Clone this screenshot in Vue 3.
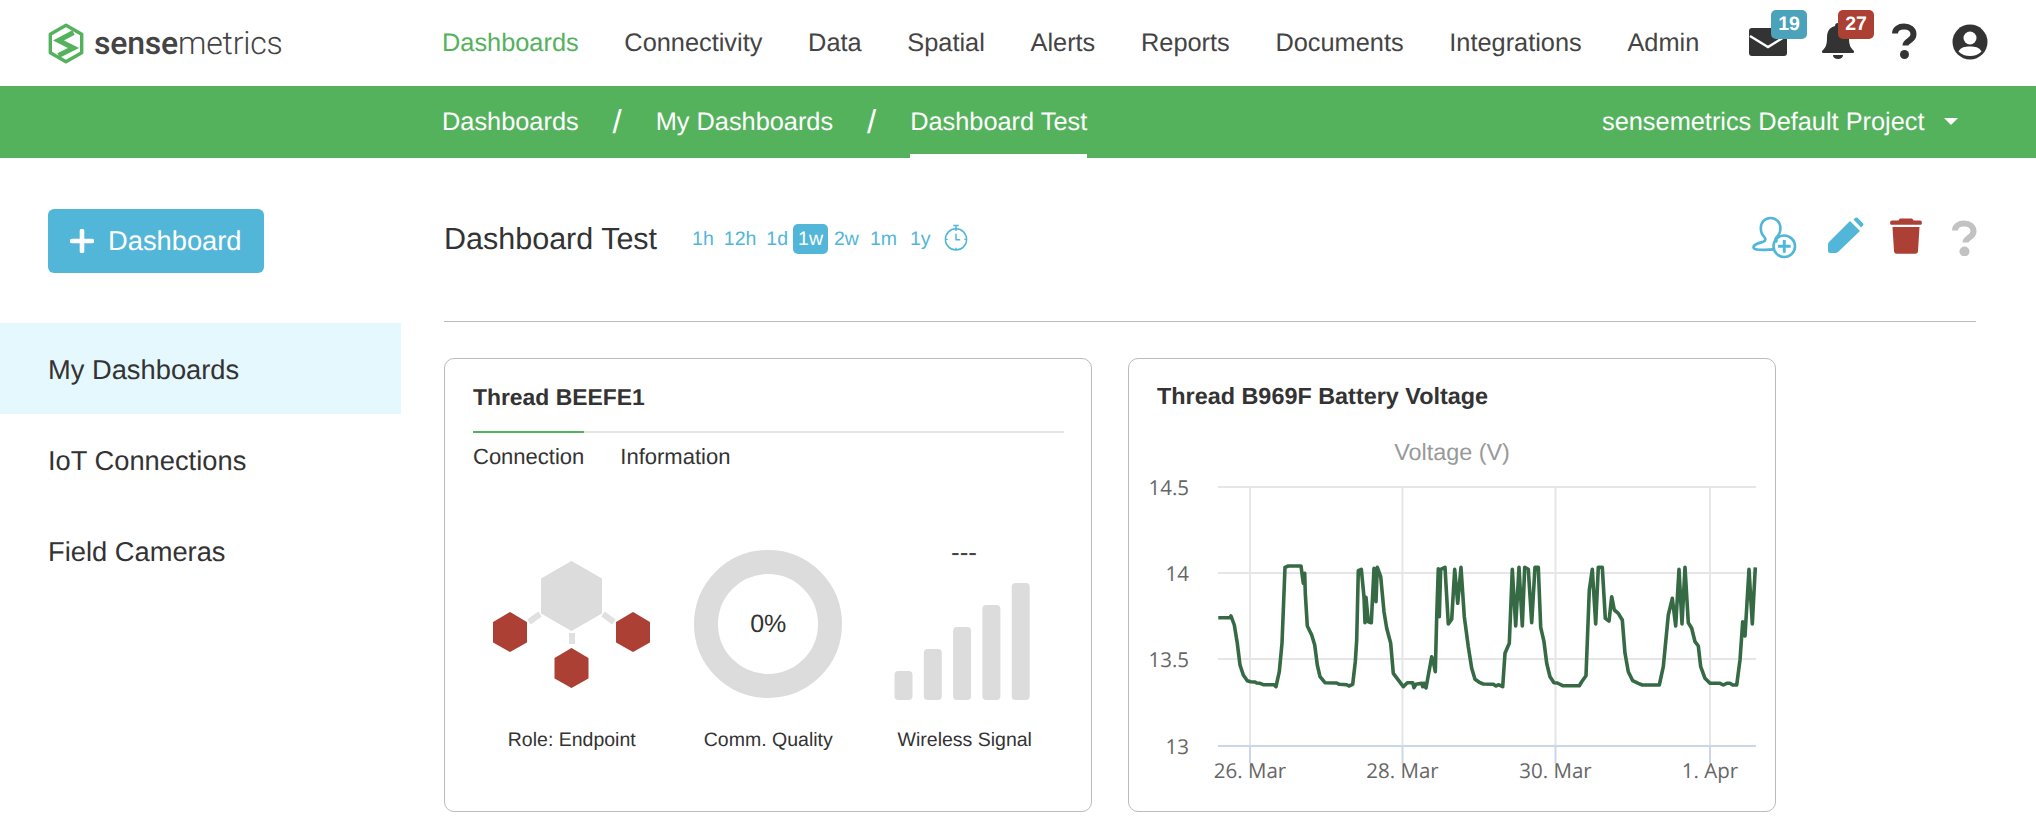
<script setup>
const nav = ['Dashboards','Connectivity','Data','Spatial','Alerts','Reports','Documents','Integrations','Admin']
const ranges = ['1h','12h','1d','1w','2w','1m','1y']
const side = ['My Dashboards','IoT Connections','Field Cameras']

const z7 = [[55,233],[90,233],[93,228],[103,255],[112,310],[120,375],[130,405],[142,422],[152,425],[165,426],[170,429],[180,430],[190,434],[222,434],[228,440],[238,395],[246,310],[255,82],[265,78],[303,78],[310,130],[314,100],[316,160],[322,258],[335,285],[344,315],[352,375],[360,410],[375,428],[410,429],[418,433],[440,434],[447,438],[458,433],[466,365],[470,300],[475,92],[484,88],[492,170],[495,248],[498,172],[505,245],[514,248],[522,85],[528,185],[532,82],[542,110],[552,215],[560,265],[572,310],[580,400],[610,440],[622,428],[638,428],[642,443],[648,433],[665,430],[668,440],[672,430],[678,444],[695,350],[700,365],[706,395],[710,230],[715,86],[718,230],[722,88],[735,82],[745,252],[755,238],[764,88],[773,190],[783,82],[793,230],[805,320],[815,385],[825,418]]
const z8 = [[0,428],[10,432],[40,433],[48,438],[55,434],[68,440],[75,340],[88,310],[97,88],[107,258],[117,82],[127,258],[134,82],[145,88],[155,248],[165,82],[175,82],[182,262],[192,305],[200,370],[210,410],[222,428],[232,429],[248,437],[298,437],[305,425],[318,407],[328,150],[337,88],[347,252],[355,82],[367,82],[376,235],[387,243],[395,170],[403,210],[415,220],[427,240],[435,340],[445,395],[458,422],[475,430],[487,435],[538,435],[550,380],[565,225],[577,175],[587,258],[597,88],[606,252],[615,82],[625,248],[635,265],[645,305],[655,318],[662,380],[675,415],[690,430],[720,430],[730,435],[740,430],[750,430],[758,435],[770,435],[780,360],[788,245],[795,288],[807,88],[817,252],[826,82]]
const line = [
  ...z7.map(([x, y]) => `${(1200 + x / 3).toFixed(1)},${(540 + y / 3).toFixed(1)}`),
  ...z8.map(([x, y]) => `${(1480 + x / 3).toFixed(1)},${(540 + y / 3).toFixed(1)}`)
].join(' ')
const yTicks = [{ y: 487, t: '14.5' }, { y: 573, t: '14' }, { y: 659, t: '13.5' }, { y: 746, t: '13' }]
const xTicks = [{ x: 1250, t: '26. Mar' }, { x: 1402.5, t: '28. Mar' }, { x: 1555.5, t: '30. Mar' }, { x: 1710, t: '1. Apr' }]
const bars = [670, 648, 626, 604, 582]
</script>

<template>
  <div class="page">
    <header class="top">
      <div class="brand">
        <svg class="logo" viewBox="0 0 36 41" width="36" height="41">
          <path d="M18 2.200 33.700 11.300V29.700L18 38.800 2.300 29.700V11.300Z" fill="#fff" stroke="#54b25d" stroke-width="3.400" stroke-linejoin="round"/>
          <path d="M25.500 9.500 10.500 17.500 25.500 25 10.500 32.500" fill="none" stroke="#54b25d" stroke-width="5" stroke-linejoin="miter"/>
        </svg>
        <span class="word"><b>sense</b>metrics</span>
      </div>
      <nav class="mainnav">
        <a v-for="(n, i) in nav" :key="n" :class="{ on: i === 0 }">{{ n }}</a>
      </nav>
      <div class="tools">
        <div class="tool mail">
          <svg viewBox="0 0 38 28" width="38" height="28"><path d="M3 0H35Q38 0 38 3V25Q38 28 35 28H3Q0 28 0 25V3Q0 0 3 0Z" fill="#333"/><path d="M1 8 19 19 37 8" fill="none" stroke="#fff" stroke-width="2.400"/></svg>
          <span class="badge blue">19</span>
        </div>
        <div class="tool bell">
          <svg viewBox="0 0 32 36" width="32" height="36"><path d="M16 0c2 0 3 1.200 3 3 6 1.500 8 6 8 12 0 8 2 10 5 13 .5 1-.2 2-1 2H1c-.8 0-1.500-1-1-2 3-3 5-5 5-13 0-6 2-10.500 8-12 0-1.800 1-3 3-3Z" fill="#333"/><path d="M11 32h10c0 2.500-2 4-5 4s-5-1.500-5-4Z" fill="#333"/></svg>
          <span class="badge red">27</span>
        </div>
        <svg class="help" viewBox="0 0 26 36" width="26" height="36"><path d="M4 10.500C4 6 8 3.500 13 3.500c5.500 0 9.500 3 9.500 7.800 0 6.700-8 6.200-8 11.200" fill="none" stroke="#333" stroke-width="6"/><circle cx="13.500" cy="31.500" r="4.500" fill="#333"/></svg>
        <svg class="user" viewBox="0 0 36 36" width="36" height="36"><circle cx="18" cy="18" r="17.500" fill="#333"/><circle cx="18" cy="14" r="6.500" fill="#fff"/><path d="M6.500 27.500C9 23 13 22.500 18 22.500s9 .5 11.500 5C26.500 30.500 22.500 32 18 32S9.500 30.500 6.500 27.500Z" fill="#fff"/></svg>
      </div>
    </header>

    <div class="greenbar">
      <div class="crumbs">
        <a>Dashboards</a><i>/</i><a>My Dashboards</a><i>/</i><a class="cur">Dashboard Test</a>
      </div>
      <div class="project">sensemetrics Default Project<span class="caret"></span></div>
    </div>

    <div class="body">
      <aside class="side">
        <button class="add"><svg viewBox="0 0 24 24" width="24" height="24"><path d="M12 2v20M2 12h20" stroke="#fff" stroke-width="4.600" stroke-linecap="round"/></svg>Dashboard</button>
        <ul class="menu">
          <li v-for="(s, i) in side" :key="s" :class="{ on: i === 0 }">{{ s }}</li>
        </ul>
      </aside>

      <main class="main">
        <div class="head">
          <h1>Dashboard Test</h1>
          <div class="ranges">
            <span v-for="r in ranges" :key="r" :class="{ on: r === '1w' }">{{ r }}</span>
            <svg class="clock" viewBox="0 0 26 30" width="24" height="28"><g fill="none" stroke="#52b6d9" stroke-width="1.600"><circle cx="13" cy="16.500" r="11.500"/><path d="M10 1.500h6M13 1.500V5M13 10.500v6.500h4.500M13 5v2.500M13 25.500V28M1.500 16.500H4M22 16.500h2.500"/></g></svg>
          </div>
          <div class="actions">
            <svg viewBox="0 0 46 44" width="45" height="43"><g fill="none" stroke="#52b6d9" stroke-width="2.700"><path d="M19 2c6 0 10 4.500 10 10.500 0 4-1.800 7.500-4 9.500-1.500 1.500-1 3.500 1 4.500M13 22c-2.200-2-4-5.500-4-9.500C9 6.500 13 2 19 2M13 22c1.200 1.700.5 3.500-1.500 4.300C6 28 2 29 1.500 31.500c-.5 2 2.500 2.800 6 3 5 .3 12 0 15-.3"/><circle cx="33" cy="31" r="11"/><path d="M33 24.500v13M26.500 31h13" stroke-width="3"/></g></svg>
            <svg viewBox="0 0 36 36" width="36" height="36"><path d="M25.500 2.500 27.500.8Q28.500 0 29.500.8L35 6.300Q36 7.500 35 8.500L33 10.500Z M22 4 32 14 10 35Q9 36 7 36H2Q0 36 0 34V28Q0 26 1 25Z" fill="#52b6d9"/></svg>
            <svg viewBox="0 0 32 37" width="32" height="37"><path d="M11 1.500h10c1 0 2 .6 2.500 2H30c1.200 0 1.800.8 1.800 1.800v1.200c0 .8-.6 1.300-1.500 1.300H1.700C.8 7.800.2 7.300.2 6.500V5.300C.2 4.300.8 3.500 2 3.500h6.500c.5-1.400 1.500-2 2.500-2Z" fill="#ac4034"/><path d="M2.500 10h27l-1.500 24c-.1 1.800-1 2.800-3 2.800H7c-2 0-2.900-1-3-2.800Z" fill="#ac4034"/></svg>
            <svg viewBox="0 0 26 36" width="26" height="36"><path d="M4 10.500C4 6 8 3.500 13 3.500c5.500 0 9.500 3 9.500 7.800 0 6.700-8 6.200-8 11.200" fill="none" stroke="#c2c2c2" stroke-width="6"/><circle cx="13.500" cy="31.500" r="5" fill="#c2c2c2"/></svg>
          </div>
        </div>

        <div class="cards">
          <section class="card">
            <h2>Thread BEEFE1</h2>
            <div class="tabs">
              <span class="tab active">Connection</span>
              <span class="tab">Information</span>
            </div>
            <div class="metrics">
              <div class="metric">
                <svg class="graphic" viewBox="486 545 170 150" width="170" height="150">
                  <path d="M528 621 539 613M602 613 613 621M571 632V643" stroke="#e0e0e0" stroke-width="6"/>
                  <path d="M570.500 561 600 578V612L570.500 629 541 612V578Z" fill="#dcdcdc" stroke="#dcdcdc" stroke-width="2" stroke-linejoin="round"/>
                  <g fill="#ac4034" stroke="#ac4034" stroke-width="2" stroke-linejoin="round">
                    <path d="M509 612 525 621.500V641L509 650 493 641V621.500Z"/>
                    <path d="M632 612 648 621.500V641L632 650 616 641V621.500Z"/>
                    <path d="M570.500 648 586.500 657.500V677L570.500 686 554.500 677V657.500Z"/>
                  </g>
                </svg>
                <span class="cap">Role: Endpoint</span>
              </div>
              <div class="metric">
                <div class="donut">0%</div>
                <span class="cap">Comm. Quality</span>
              </div>
              <div class="metric">
                <svg class="graphic signal" viewBox="880 530 170 170" width="170" height="170">
                  <text x="964" y="560" text-anchor="middle" class="dash">---</text>
                  <rect v-for="(t, i) in bars" :key="i" :x="894.500 + i * 29.300" :y="t" width="18" :height="699 - t" rx="4" fill="#dcdcdc"/>
                </svg>
                <span class="cap">Wireless Signal</span>
              </div>
            </div>
          </section>

          <section class="card chartcard">
            <h2>Thread B969F Battery Voltage</h2>
            <svg class="chart" viewBox="1130 420 644 380" width="644" height="380">
              <text x="1452" y="460" text-anchor="middle" class="ctitle">Voltage (V)</text>
              <line v-for="t in yTicks.slice(0, 3)" :key="t.t" x1="1218" x2="1756" :y1="t.y" :y2="t.y" stroke="#e6e6e6" stroke-width="2"/>
              <line v-for="t in xTicks" :key="t.t" :x1="t.x" :x2="t.x" y1="487" y2="746" stroke="#e6e6e6" stroke-width="2"/>
              <line v-for="t in xTicks" :key="t.t + 'k'" :x1="t.x" :x2="t.x" y1="746" y2="763" stroke="#ccd6eb" stroke-width="2"/>
              <line x1="1218" x2="1756" y1="746" y2="746" stroke="#ccd6eb" stroke-width="2"/>
              <polyline :points="line" fill="none" stroke="#366a45" stroke-width="3.600" stroke-linejoin="round"/>
              <text v-for="t in yTicks" :key="t.t + 'l'" x="1189" :y="t.y + 8" text-anchor="end" class="tick">{{ t.t }}</text>
              <text v-for="t in xTicks" :key="t.t + 'x'" :x="t.x" y="778" text-anchor="middle" class="tick">{{ t.t }}</text>
            </svg>
          </section>
        </div>
      </main>
    </div>
  </div>
</template>

<style>
html, body { margin: 0; background: #fff; }
</style>

<style scoped>
.page { width: 2036px; height: 834px; overflow: hidden; font-family: "Liberation Sans", Arial, sans-serif; color: #333; background: #fff; text-rendering: geometricPrecision; }
.top { height: 86px; display: flex; align-items: center; position: relative; }
.brand { width: 442px; padding-left: 48px; box-sizing: border-box; display: flex; align-items: center; gap: 10px; flex: none; }
.logo { flex: none; }
.word { font-family: Roboto, sans-serif; font-weight: 300; font-size: 32px; color: #444; letter-spacing: -0.2px; }
.word b { font-weight: 500; }
.mainnav { display: flex; gap: 45.700px; font-size: 25.350px; color: #444; padding-top: 1px; }
.mainnav .on { color: #54b25d; }
.tools { position: absolute; left: 0; top: 0; }
.tool, .help, .user { position: absolute; }
.mail { left: 1749px; top: 28px; }
.bell { left: 1822px; top: 23px; }
.help { left: 1891px; top: 23px; }
.user { left: 1952px; top: 24px; }
.tool svg { display: block; }
.badge { position: absolute; height: 29px; width: 36px; border-radius: 5px; color: #fff; font-weight: 700; font-size: 19.500px; line-height: 28px; text-align: center; }
.blue { background: #4aa3ba; left: 22px; top: -18px; }
.red { background: #ac4034; left: 16px; top: -13px; }

.greenbar { height: 72px; background: #54b25d; color: #fff; display: flex; font-size: 25.350px; padding-left: 442px; box-sizing: border-box; position: relative; }
.crumbs { display: flex; align-items: stretch; }
.crumbs a { display: flex; align-items: center; height: 100%; box-sizing: border-box; padding-top: 1px; }
.crumbs i { font-style: normal; display: flex; align-items: center; justify-content: center; width: 77px; font-size: 33px; }
.crumbs .cur { border-bottom: 4px solid #fff; padding-top: 5px; }
.project { position: absolute; left: 1602px; top: 0; height: 100%; padding-top: 1px; box-sizing: border-box; display: flex; align-items: center; }
.caret { margin-left: 19px; margin-top: -2px; border: 7.500px solid transparent; border-top: 7.500px solid #fff; border-bottom: 0; }

.body { display: flex; }
.side { width: 401px; flex: none; padding-top: 51px; }
.add { margin-left: 48px; width: 216px; height: 64px; background: #52b6d9; border: 0; border-radius: 6px; color: #fff; font: 27.300px "Liberation Sans", Arial, sans-serif; text-rendering: geometricPrecision; display: flex; align-items: center; gap: 14px; padding: 0 0 0 22px; box-sizing: border-box; }
.menu { list-style: none; margin: 50px 0 0; padding: 0; }
.menu li { height: 91px; line-height: 93px; padding-left: 48px; font-size: 27.300px; color: #333; }
.menu li.on { background: #e5f8fd; }

.main { margin-left: 43px; width: 1532px; }
.head { height: 163px; border-bottom: 1px solid #bbb; position: relative; display: flex; align-items: flex-start; }
.head h1 { margin: 60px 0 0; font-size: 30.500px; font-weight: 400; line-height: 42px; color: #333; }
.ranges { display: flex; align-items: center; margin: 62px 0 0 30px; color: #52b6d9; font-size: 19.500px; height: 38px; }
.ranges span { padding: 0 5px; height: 30px; line-height: 30px; border-radius: 5px; }
.ranges span:nth-child(5) { margin-left: 1px; }
.ranges span:nth-child(6) { margin-left: 1px; }
.ranges span:nth-child(7) { margin-left: 3px; }
.ranges span.on { background: #52b6d9; color: #fff; }
.clock { margin-left: 8px; margin-top: -3px; }
.actions { position: absolute; left: 1308px; top: 0; width: 224px; height: 80px; }
.actions svg { position: absolute; }
.actions svg:nth-child(1) { left: 0; top: 58px; }
.actions svg:nth-child(2) { left: 76px; top: 59px; }
.actions svg:nth-child(3) { left: 138px; top: 59px; }
.actions svg:nth-child(4) { left: 199px; top: 62px; }

.cards { display: flex; gap: 36px; margin-top: 36px; }
.card { width: 648px; height: 454px; border: 1px solid #bbb; border-radius: 10px; box-sizing: border-box; padding: 0 28px; flex: none; position: relative; }
.card h2 { margin: 0; padding-top: 25px; font-size: 22.900px; line-height: 26px; font-weight: 700; color: #333; }
.tabs { margin-top: 21px; border-top: 2px solid #e4e4e4; display: flex; gap: 36px; font-size: 22px; width: 591px; }
.tab { position: relative; padding-top: 11px; line-height: 26px; }
.tab.active::before { content: ""; position: absolute; left: 0; right: 0; top: -2px; height: 2px; background: #54b25d; }
.metrics { display: flex; position: relative; height: 340px; margin-left: 0.500px; }
.metric { position: relative; flex: none; width: 196.500px; }
.graphic { position: absolute; top: 76px; left: 50%; transform: translateX(-50%); }
.signal { top: 61px; }
.cap { position: absolute; top: 258px; left: 50%; transform: translateX(-50%); font-size: 19.500px; line-height: 24px; white-space: nowrap; color: #333; }
.donut { position: absolute; top: 80px; left: 50%; margin-left: -74px; width: 148px; height: 148px; box-sizing: border-box; border: 24px solid #dcdcdc; border-radius: 50%; display: flex; align-items: center; justify-content: center; font-size: 25px; }
.dash { font-family: "Liberation Sans", Arial, sans-serif; font-size: 26px; fill: #444; }
.chartcard h2 { font-size: 23.400px; padding-top: 24px; }
.chart { position: absolute; left: 1px; top: 61px; display: block; }
.ctitle { font-family: "Liberation Sans", Arial, sans-serif; font-size: 23.400px; fill: #999; }
.tick { font-family: "Open Sans", sans-serif; font-size: 20.500px; fill: #666; }
</style>
